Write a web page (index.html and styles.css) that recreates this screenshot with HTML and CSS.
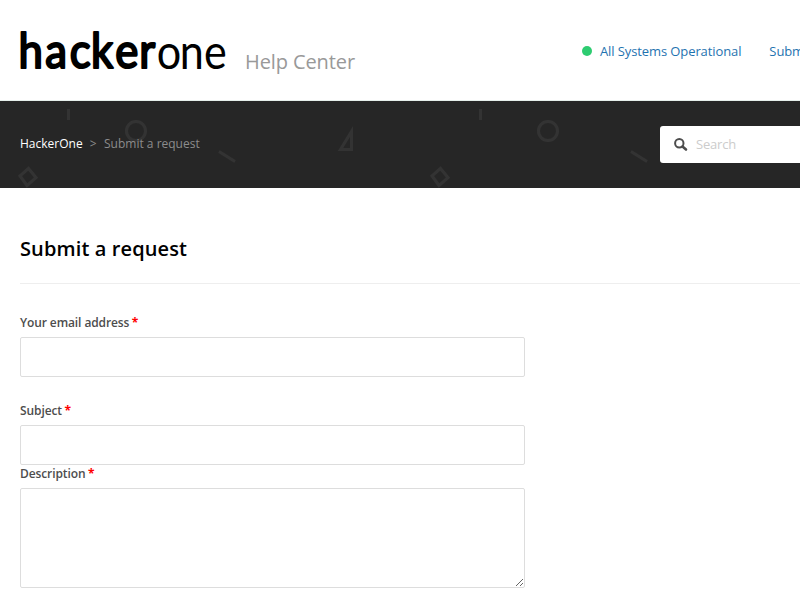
FILE: index.html
```html
<!DOCTYPE html>
<html lang="en">
<head>
<meta charset="utf-8">
<title>Submit a request – HackerOne Help Center</title>
<link rel="stylesheet" href="styles.css">
</head>
<body>
<header class="header">
  <a class="logo">
    <svg width="210" height="56" viewBox="0 0 210 56" aria-label="hackerone">
      <text class="logo-bold" y="47.500" x="-1.700 27.800 54.800 78 104.800 131">hacker</text>
      <text class="logo-light" y="48.300" x="155.500 181.500 209">one</text>
    </svg>
  </a>
  <span class="logo-title">Help Center</span>
  <nav class="nav">
    <a class="status"><i class="dot"></i>All Systems Operational</a>
    <a>Submit a request</a>
  </nav>
</header>
<div class="band">
  <svg class="pattern" width="980" height="87" aria-hidden="true">
    <defs>
      <pattern id="shapes" width="412" height="87" patternUnits="userSpaceOnUse">
        <g fill="none" stroke="#333" stroke-width="3">
          <path d="M68.5 8v11"/>
          <circle cx="136" cy="30" r="9.5"/>
          <path d="M340.500 48.500L351.500 30.500V48.500Z"/>
          <path d="M219 50.500L235 60.500"/>
          <path d="M28.500 67.500L36 76.500L27 84.500L20 75Z"/>
        </g>
      </pattern>
    </defs>
    <rect width="980" height="87" fill="url(#shapes)"/>
  </svg>
  <div class="band-row">
    <div class="crumbs"><a>HackerOne</a><span class="sep">&gt;</span><span>Submit a request</span></div>
    <div class="search">
      <svg width="14" height="14" viewBox="0 0 14 14" fill="none" stroke="#4d4d4d"><circle cx="5.300" cy="5.300" r="4.200" stroke-width="2"/><path d="M8.500 8.500L12 11.500" stroke-width="2.600" stroke-linecap="round"/></svg>
      <input type="search" placeholder="Search">
    </div>
  </div>
</div>
<main class="main">
  <h1>Submit a request</h1>
  <form>
    <div class="field email"><label>Your email address<b>*</b></label><input type="text"></div>
    <div class="field"><label>Subject<b>*</b></label><input type="text"></div>
    <div class="field"><label>Description<b>*</b></label><textarea></textarea></div>
  </form>
</main>
</body>
</html>
```
FILE: styles.css
```css
* { box-sizing: border-box; }
html { overflow: hidden; }
body {
  margin: 0;
  width: 980px;
  background: #fff;
  color: #4d4d4d;
  font: 12px/18px "Open Sans", "Noto Sans", sans-serif;
}
.header {
  display: flex;
  height: 101px;
  padding-left: 20px;
  border-bottom: 1px solid #e6efeb;
}
.logo { width: 225px; padding-top: 21px; }
.logo svg { display: block; overflow: visible; }
.logo text { font-family: Lato, sans-serif; font-weight: 400; transform-origin: 0 0; }
.logo-bold { font-size: 48px; stroke: #000; stroke-width: 2.2px; stroke-linejoin: round; transform: scaleX(.91); }
.logo-light { font-size: 49px; transform: scaleX(.88); }
.logo-title { width: 337px; padding-top: 47px; font-size: 20px; line-height: 30px; letter-spacing: -.1px; color: #999; }
.nav { display: flex; align-items: flex-start; gap: 28px; padding-top: 41px; font-size: 13px; line-height: 20px; letter-spacing: -.1px; color: #1f73b0; white-space: nowrap; }
.status { display: flex; align-items: center; }
.dot { width: 10px; height: 10px; margin-right: 8px; border-radius: 50%; background: #2ecc71; }
.band { position: relative; height: 87px; background: #262626; }
.pattern { position: absolute; top: 0; left: 0; }
.band-row { position: relative; display: flex; align-items: center; justify-content: space-between; height: 87px; padding: 0 20px; }
.crumbs { padding-bottom: 2px; color: #8c8c8c; }
.crumbs a { color: #fff; }
.sep { margin: 0 7.5px 0 7px; }
.search { display: flex; align-items: center; width: 300px; height: 37px; padding-left: 14px; border-radius: 3px; background: #fff; }
.search input { width: 240px; margin-left: 8px; padding: 0 0 2px; border: 0; outline: 0; font: 13px/20px "Open Sans", sans-serif; letter-spacing: -.2px; }
.search input::placeholder { color: #ccc; }
.main { padding: 45px 20px 0; }
h1 {
  height: 51px;
  margin: 0 0 30px;
  border-bottom: 1px solid #eee;
  color: #000;
  font-size: 20px;
  line-height: 32px;
  font-weight: 600;
  letter-spacing: .12px;
}
.email { margin-bottom: 25px; }
label { display: block; height: 23px; font-weight: 600; letter-spacing: -.1px; }
label b { margin-left: 2.5px; color: #f00; font-weight: 700; }
.field input, textarea {
  display: block;
  width: 505px;
  height: 40px;
  border: 1px solid #ddd;
  border-radius: 2px;
  background: #fff;
}
textarea { height: 100px; resize: vertical; }
```
